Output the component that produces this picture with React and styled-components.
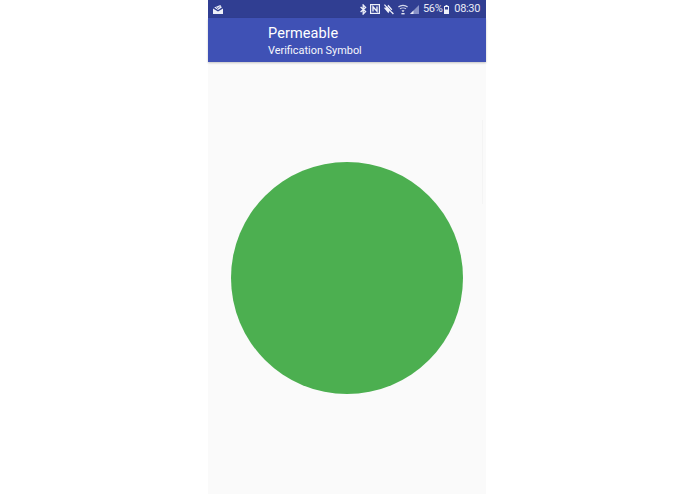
import React from 'react';
import styled, { createGlobalStyle } from 'styled-components';

const GlobalStyle = createGlobalStyle`
html, body {
  margin: 0;
  height: 100%;
  background: #ffffff;
  font-family: Roboto, "Liberation Sans", sans-serif;
}
#root {
  height: 100%;
}
`

const Page = styled.div`
height: 494px;
overflow: hidden;
display: flex;
justify-content: center;
padding-right: 1px;
`
const Phone = styled.div`
width: 278px;
display: flex;
flex-direction: column;
background: #fafafa;
`
const StatusBar = styled.div`
height: 18px;
flex-shrink: 0;
background: #303e92;
display: flex;
align-items: center;
justify-content: space-between;
padding: 0 6px 0 5px;
color: #e9ebf6;
`
const StatusGroup = styled.div`
display: flex;
align-items: center;
`
const StatusSlot = styled.span`
display: flex;
margin-left: ${props => props.$left || 0}px;
`
const StatusText = styled.span`
font-size: 11px;
line-height: 18px;
letter-spacing: -0.35px;
margin-left: ${props => props.$left || 0}px;
`
const Toolbar = styled.div`
height: 44px;
flex-shrink: 0;
background: #3f51b5;
box-shadow: 0 1px 2px rgba(0, 0, 0, 0.22);
padding-left: 60px;
color: #ffffff;
display: flex;
flex-direction: column;
position: relative;
`
const Title = styled.div`
font-size: 14.5px;
line-height: 17px;
margin-top: 7px;
letter-spacing: 0.1px;
`
const Subtitle = styled.div`
font-size: 10.9px;
line-height: 13px;
margin-top: 2px;
color: #f6f7fc;
`
const Content = styled.div`
flex: 1;
display: flex;
justify-content: center;
padding-top: 100px;
position: relative;
`
const Circle = styled.div`
width: 232px;
height: 232px;
border-radius: 50%;
background: #4caf50;
`
const ScrollEdge = styled.div`
position: absolute;
right: 3px;
top: 58px;
height: 84px;
width: 1px;
background: #f4f4f4;
`

const MailIcon = () => (
  <svg width="10" height="9" viewBox="0 0 10 9">
    <path d="M0 3.6 L5 6.4 L10 3.6 V9 H0 Z" fill="#eef0f9" />
    <path d="M1.2 2.6 L7.4 0 L8.8 2.6 L5 5 Z" fill="#eef0f9" />
    <path d="M3.4 2.4 L4.8 3.5 L6.8 1.5" fill="none" stroke="#303e92" strokeWidth="0.8" />
  </svg>
)

const BluetoothIcon = () => (
  <svg width="7" height="11" viewBox="0 0 7 11">
    <path d="M0.6 3 L5.6 7.6 L3.2 10 V1 L5.6 3.4 L0.6 8" fill="none" stroke="#eef0f9" strokeWidth="1.3" />
  </svg>
)

const NfcIcon = () => (
  <svg width="10" height="10" viewBox="0 0 10 10">
    <rect x="0.6" y="0.6" width="8.8" height="8.8" fill="none" stroke="#eef0f9" strokeWidth="1.2" />
    <path d="M3 7.4 V2.8 L7 7.2 V2.6" fill="none" stroke="#eef0f9" strokeWidth="1.4" />
  </svg>
)

const MuteIcon = () => (
  <svg width="11" height="11" viewBox="0 0 11 11">
    <path d="M0.8 3.8 L3 3.4 L5.4 0.8 L9.4 5.4 L6.6 7 L5.4 9.2 Z" fill="#eef0f9" />
    <path d="M1.4 0.6 L10.4 10" stroke="#eef0f9" strokeWidth="1.3" />
    <path d="M3 0.8 L9.6 7.8" stroke="#303e92" strokeWidth="0.7" />
  </svg>
)

const WifiIcon = () => (
  <svg width="10" height="11" viewBox="0 0 10 11">
    <path d="M0.4 3 C3 0.8 7 0.8 9.6 3" fill="none" stroke="#d5d9ec" strokeWidth="1.1" />
    <path d="M2 4.9 C3.6 3.6 6.4 3.6 8 4.9" fill="none" stroke="#d5d9ec" strokeWidth="1.1" />
    <path d="M3.5 6.6 C4.4 6 5.6 6 6.5 6.6 L5 8.3 Z" fill="#e4e7f4" />
    <rect x="3.4" y="9" width="3.2" height="1.4" fill="#e4e7f4" />
  </svg>
)

const SignalIcon = () => (
  <svg width="9" height="9" viewBox="0 0 9 9">
    <path d="M0 9 L9 0 V9 Z" fill="#8791c6" />
    <path d="M0 9 L3.5 5.5 V9 Z" fill="#e4e7f4" />
  </svg>
)

const BatteryIcon = () => (
  <svg width="5" height="9" viewBox="0 0 5 9">
    <path d="M1.5 0 H3.5 V1 H5 V9 H0 V1 H1.5 Z" fill="#eef0f9" />
    <rect x="1" y="2" width="3" height="2.5" fill="#303e92" />
  </svg>
)

export default function App() {
  return (
    <Page>
      <GlobalStyle />
      <Phone>
        <StatusBar>
          <StatusGroup>
            <MailIcon />
          </StatusGroup>
          <StatusGroup>
            <StatusSlot><BluetoothIcon /></StatusSlot>
            <StatusSlot $left={3}><NfcIcon /></StatusSlot>
            <StatusSlot $left={3}><MuteIcon /></StatusSlot>
            <StatusSlot $left={4}><WifiIcon /></StatusSlot>
            <StatusSlot $left={2}><SignalIcon /></StatusSlot>
            <StatusText $left={4}>56%</StatusText>
            <StatusSlot $left={2}><BatteryIcon /></StatusSlot>
            <StatusText $left={5}>08:30</StatusText>
          </StatusGroup>
        </StatusBar>
        <Toolbar>
          <Title>Permeable</Title>
          <Subtitle>Verification Symbol</Subtitle>
        </Toolbar>
        <Content>
          <Circle />
          <ScrollEdge />
        </Content>
      </Phone>
    </Page>
  );
}
